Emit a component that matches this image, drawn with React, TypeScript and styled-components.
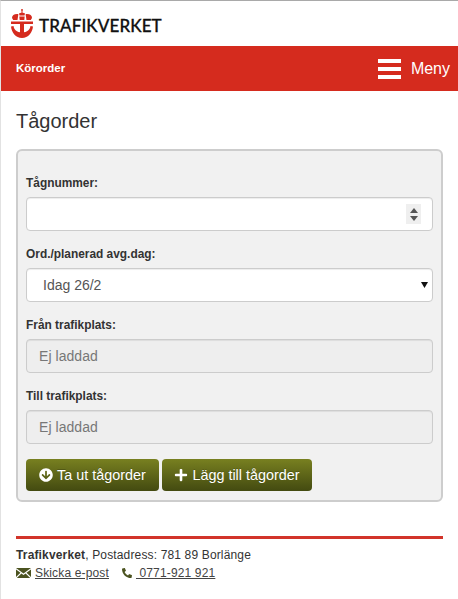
import React from 'react';
import styled, { createGlobalStyle } from 'styled-components';
import { FaArrowCircleDown, FaPlus, FaPhoneAlt } from 'react-icons/fa';

const GlobalStyle = createGlobalStyle`
  html, body {
    margin: 0;
    padding: 0;
    background: #fff;
  }
  * {
    box-sizing: border-box;
  }
  body {
    font-family: "Liberation Sans", Arial, sans-serif;
    color: #333;
  }
`;

const Page = styled.div`
  width: 458px;
  height: 599px;
  overflow: hidden;
  border-top: 1px solid #a9a9a9;
  border-left: 1px solid #e2e2e2;
`;

const Header = styled.header`
  height: 45px;
  display: flex;
  align-items: center;
  gap: 6px;
  padding: 0 0 0 10px;
`;

const BrandName = styled.span`
  font-family: Lato, "Open Sans", sans-serif;
  font-size: 17px;
  font-weight: 500;
  letter-spacing: 0.1px;
  color: #111;
  -webkit-text-stroke: 0.3px #111;
  position: relative;
  top: 2px;
`;

const RedBar = styled.nav`
  height: 45px;
  background: #d52b1e;
  display: flex;
  align-items: center;
  justify-content: space-between;
  padding: 0 8px 0 15px;
  color: #fff;
`;

const BarTitle = styled.span`
  font-size: 11.5px;
  font-weight: 700;
  position: relative;
  top: -1px;
`;

const MenuButton = styled.div`
  display: flex;
  align-items: center;
  gap: 10px;
  font-size: 16px;
`;

const Burger = styled.div`
  width: 23px;
  height: 20px;
  display: flex;
  flex-direction: column;
  justify-content: space-between;
  span {
    display: block;
    height: 4px;
    background: #fff;
  }
`;

const Main = styled.main`
  padding: 0 15px;
`;

const Title = styled.h1`
  margin: 0;
  padding-top: 18px;
  height: 58px;
  font-size: 20px;
  line-height: 24px;
  font-weight: 400;
  color: #333;
`;

const Panel = styled.form`
  height: 353px;
  background: #f1f1f1;
  border: 2px solid #cdcdcd;
  border-radius: 6px;
  padding: 24px 8px 0;
`;

const Field = styled.div`
  height: 71px;
`;

const FieldLabel = styled.label`
  display: block;
  font-size: 11.9px;
  font-weight: 700;
  line-height: 16px;
  height: 22px;
  color: #333;
`;

const InputWrap = styled.div`
  position: relative;
  height: 34px;
`;

const TextInput = styled.input`
  display: block;
  width: 100%;
  height: 34px;
  padding: 6px 12px;
  font: 14px "Liberation Sans", Arial, sans-serif;
  letter-spacing: 0.05px;
  color: #555;
  background: #fff;
  border: 1px solid #ccc;
  border-radius: 4px;
  box-shadow: inset 0 1px 1px rgba(0, 0, 0, 0.075);
  &:disabled {
    background: #eee;
    color: #777;
    opacity: 1;
  }
`;

const Spinner = styled.div`
  position: absolute;
  right: 12px;
  top: 7px;
  width: 15px;
  height: 20px;
  background: #efefef;
  display: flex;
  flex-direction: column;
  align-items: center;
  justify-content: center;
  gap: 3px;
`;

const Select = styled.select`
  display: block;
  width: 100%;
  height: 34px;
  padding: 0 12px 0 12px;
  font: 14px "Liberation Sans", Arial, sans-serif;
  color: #555;
  background: #fff;
  border: 1px solid #ccc;
  border-radius: 4px;
  appearance: none;
  text-indent: 4px;
  box-shadow: inset 0 1px 1px rgba(0, 0, 0, 0.075);
`;

const SelectArrow = styled.svg`
  position: absolute;
  right: 5px;
  top: 14px;
  width: 7px;
  height: 6px;
`;

const Buttons = styled.div`
  display: flex;
  gap: 3px;
`;

const ActionButton = styled.button<{ $width: number }>`
  width: ${p => p.$width}px;
  height: 32px;
  display: flex;
  align-items: center;
  justify-content: center;
  gap: 4px;
  padding: 0;
  font: 14.4px "Liberation Sans", Arial, sans-serif;
  color: #fff;
  border: 0;
  border-radius: 4px;
  background: linear-gradient(to bottom, #788020 0%, #434a10 100%);
  text-shadow: 0 -1px 0 rgba(0, 0, 0, 0.2);
`;

const Footer = styled.footer`
  margin-top: 34px;
  border-top: 3px solid #d2342a;
  padding-top: 7px;
  font-size: 12px;
  letter-spacing: 0.15px;
  line-height: 18px;
  color: #333;
`;

const ContactRow = styled.div`
  display: flex;
  align-items: center;
  gap: 4px;
`;

const ContactLink = styled.a`
  color: #444;
  text-decoration: underline;
  margin-right: 9px;
`;

const Crest = () => (
  <svg width="22" height="29" viewBox="0 0 22 29">
    <g fill="#d52b1e">
      <circle cx="11" cy="1" r="1" />
      <path d="M10.500 2h1v2h-1z" />
      <path d="M8 4.500c1-1 5-1 6 0l-.5 2h-5z" />
      <path d="M1 9c0-2.500 2-4 5-4 .8 0 1.400.2 1.400.2L6.500 11H2.200z" />
      <path d="M21 9c0-2.500-2-4-5-4-.8 0-1.400.2-1.400.2l.9 5.800h4.300z" />
      <path d="M8.300 7.500h5.400l-.4 3.500H8.700z" />
      <path d="M0 12.500h22v2.500H0z" />
      <path d="M9 15h4v9.500H9z" />
      <path d="M0 17.500l2.500-.5c.5 3.400 3 6.500 8.500 6.500s8-3.100 8.500-6.500l2.500.5c-.6 6-4.700 11.500-11 11.500S.6 23.500 0 17.500z" />
    </g>
  </svg>
);

const EnvelopeIcon = () => (
  <svg width="15" height="10" viewBox="0 0 15 10">
    <path fill="#4b5320" d="M0 0l7.500 5.500L15 0zM0 1.500V9l4.500-4.300zM15 1.500V9l-4.500-4.300zM5.400 5.400L.8 10h13.400L9.600 5.400 7.500 7z" />
  </svg>
);

export default function App() {
  return (
    <Page>
      <GlobalStyle />
      <Header>
        <Crest />
        <BrandName>TRAFIKVERKET</BrandName>
      </Header>
      <RedBar>
        <BarTitle>Körorder</BarTitle>
        <MenuButton>
          <Burger>
            <span />
            <span />
            <span />
          </Burger>
          Meny
        </MenuButton>
      </RedBar>
      <Main>
        <Title>Tågorder</Title>
        <Panel>
          <Field>
            <FieldLabel>Tågnummer:</FieldLabel>
            <InputWrap>
              <TextInput type="text" />
              <Spinner>
                <svg width="8" height="5" viewBox="0 0 8 5"><path fill="#555" d="M4 0l4 5H0z" /></svg>
                <svg width="8" height="5" viewBox="0 0 8 5"><path fill="#555" d="M0 0h8L4 5z" /></svg>
              </Spinner>
            </InputWrap>
          </Field>
          <Field>
            <FieldLabel>Ord./planerad avg.dag:</FieldLabel>
            <InputWrap>
              <Select defaultValue="idag">
                <option value="idag">Idag 26/2</option>
              </Select>
              <SelectArrow viewBox="0 0 7 6"><path fill="#111" d="M0 0h7L3.500 6z" /></SelectArrow>
            </InputWrap>
          </Field>
          <Field>
            <FieldLabel>Från trafikplats:</FieldLabel>
            <InputWrap>
              <TextInput type="text" disabled value="Ej laddad" readOnly />
            </InputWrap>
          </Field>
          <Field>
            <FieldLabel>Till trafikplats:</FieldLabel>
            <InputWrap>
              <TextInput type="text" disabled value="Ej laddad" readOnly />
            </InputWrap>
          </Field>
          <Buttons>
            <ActionButton type="button" $width={133}>
              <FaArrowCircleDown size={14} />
              Ta ut tågorder
            </ActionButton>
            <ActionButton type="button" $width={150}>
              <FaPlus size={14} />
              Lägg till tågorder
            </ActionButton>
          </Buttons>
        </Panel>
        <Footer>
          <div>
            <strong>Trafikverket</strong>, Postadress: 781 89 Borlänge
          </div>
          <ContactRow>
            <EnvelopeIcon />
            <ContactLink href="#">Skicka e-post</ContactLink>
            <FaPhoneAlt size={10} color="#4b5320" />
            <ContactLink href="#">&nbsp;0771-921 921</ContactLink>
          </ContactRow>
        </Footer>
      </Main>
    </Page>
  );
}
